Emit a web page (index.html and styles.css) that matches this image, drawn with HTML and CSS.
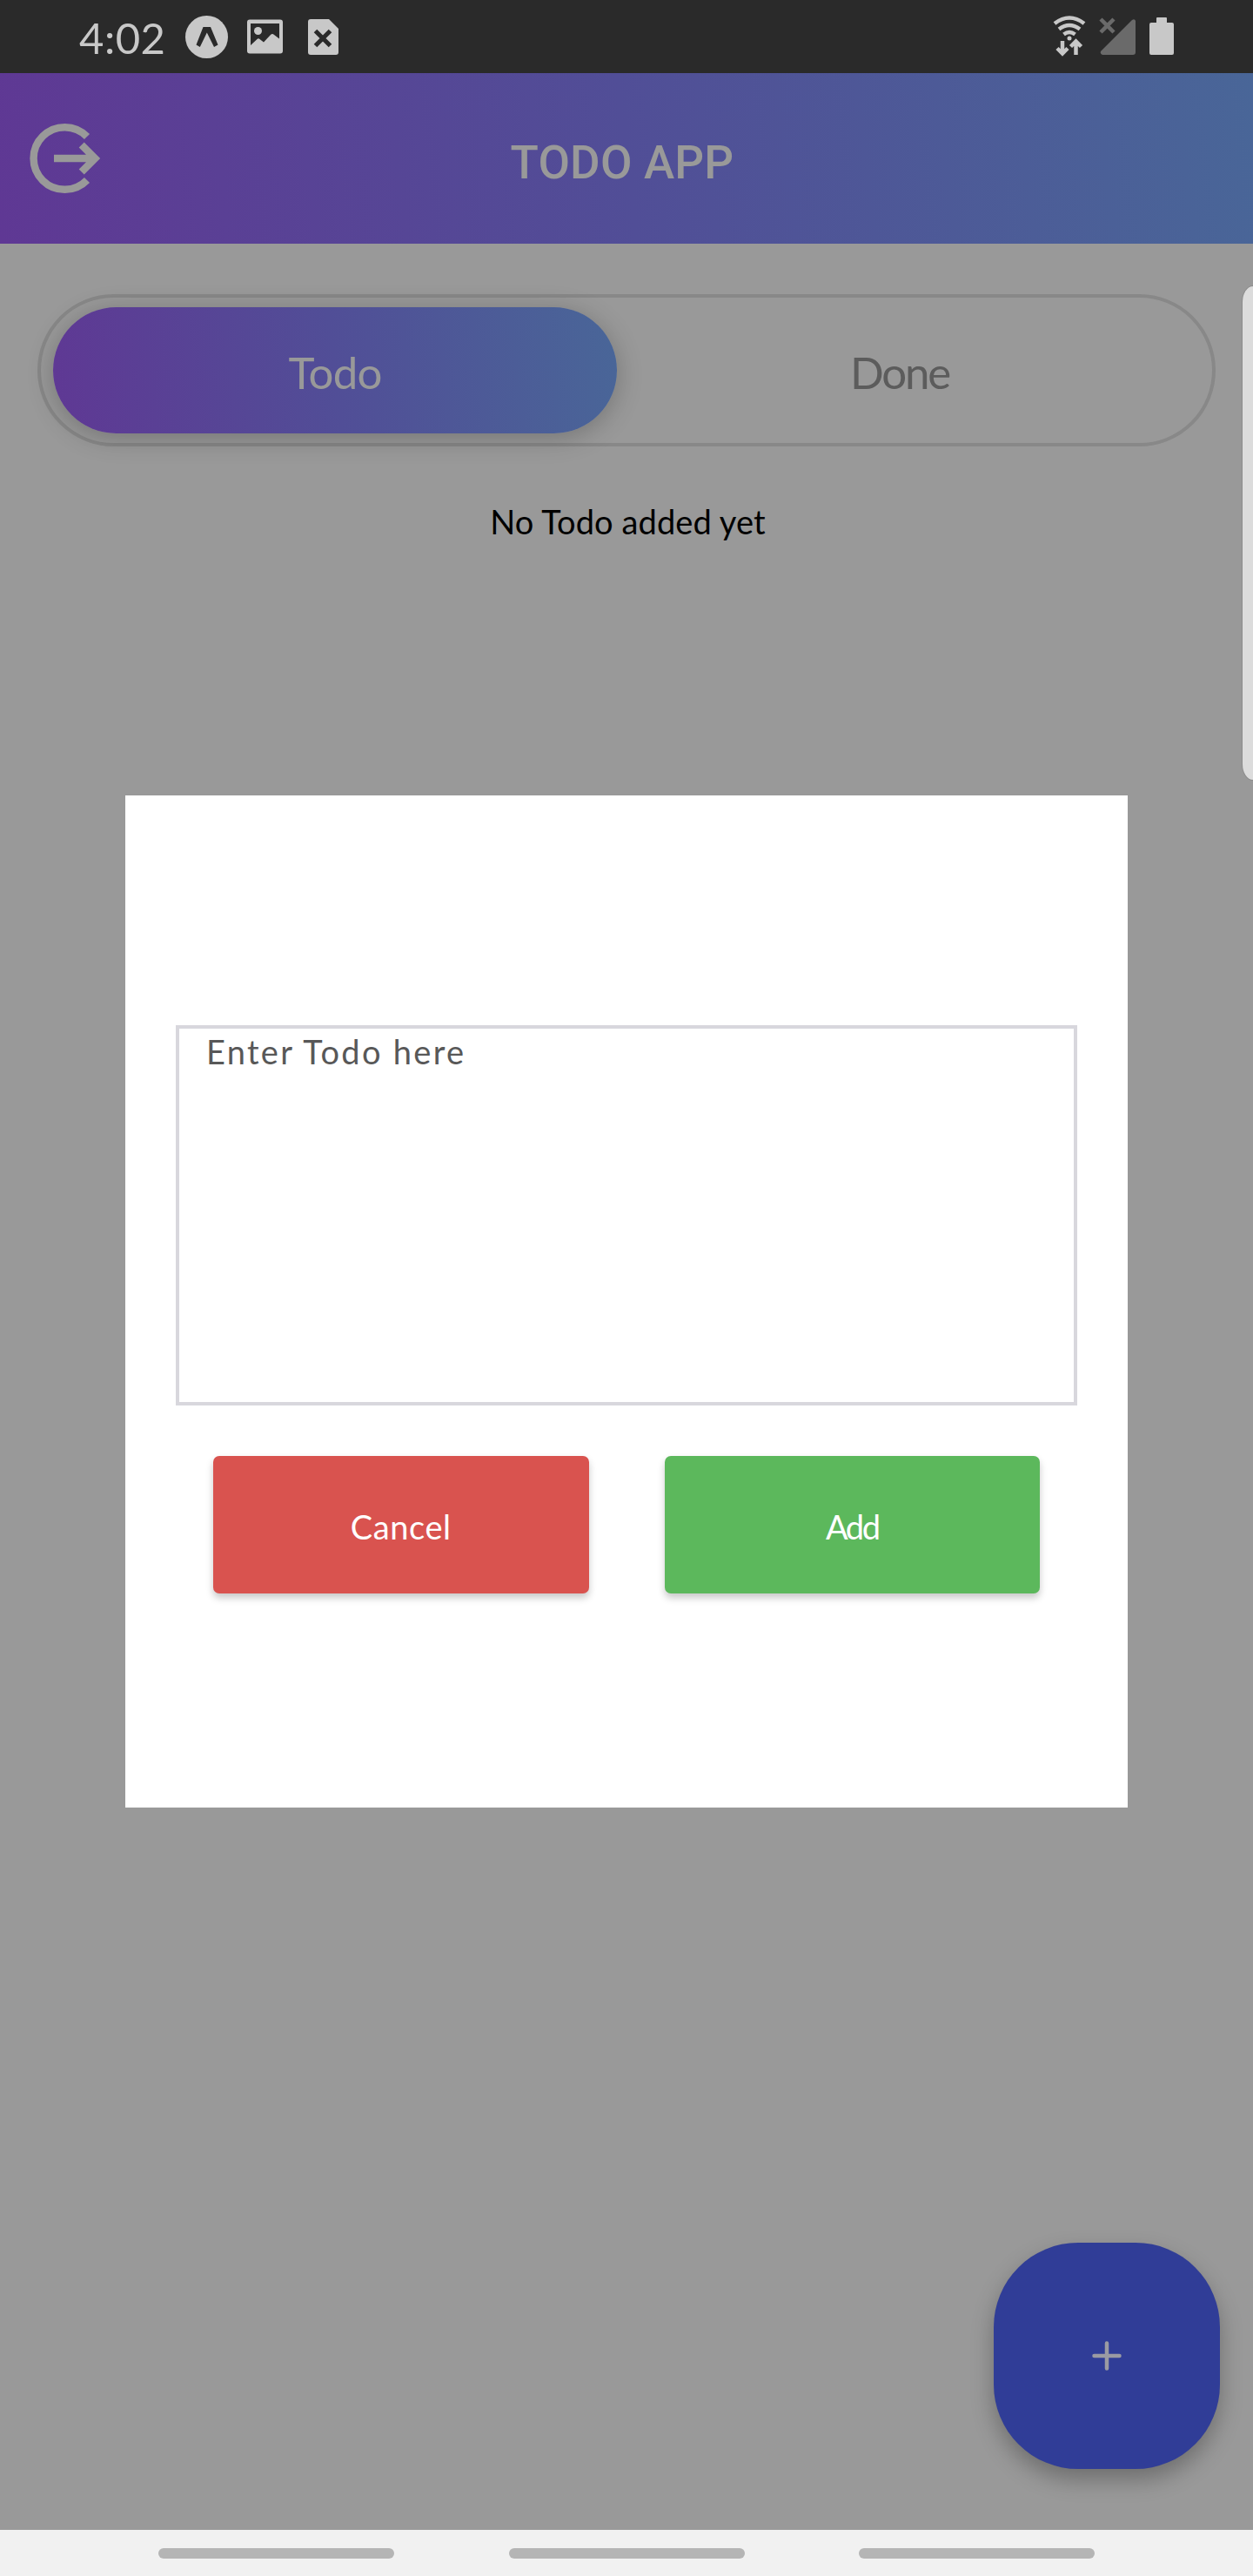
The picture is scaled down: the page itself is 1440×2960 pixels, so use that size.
FILE: index.html
```html
<!DOCTYPE html>
<html lang="en">
<head>
<meta charset="utf-8">
<title>Todo App</title>
<link rel="stylesheet" href="styles.css">
</head>
<body>
<div class="screen">
  <header class="status">
    <span class="clock">4:02</span>
    <svg width="180" height="52" viewBox="0 0 180 52">
      <circle cx="25.500" cy="26.500" r="24.500" fill="#c8c8c8"/>
      <path fill="#2a2a2a" d="M21.500 15h8.500l8.500 20.500-4.500 2.500-8.200-16.500L17.800 38l-4.300-2.500z"/>
      <path fill="#c8c8c8" fill-rule="evenodd" d="M75 6.500h35q3 0 3 3v33q0 3-3 3H75q-3 0-3-3v-33q0-3 3-3zm1 4.500v25l7.500-7q1.500-1.500 3 0l4.500 3.500 8-8.500q2-2 4 0l6 4.500V11z"/>
      <circle cx="84.500" cy="19.500" r="4.500" fill="#c8c8c8"/>
      <path fill="#c8c8c8" d="M145 6h21l11 11v27q0 3-3 3h-29q-3 0-3-3V9q0-3 3-3z"/>
      <path d="m150.500 19.500 17 17m0-17-17 17" stroke="#2a2a2a" stroke-width="5"/>
    </svg>
    <svg class="signals" width="142" height="52" viewBox="0 0 142 52">
      <g fill="none" stroke="#c8c8c8" stroke-width="4.500">
        <path d="M2 11q17-13 34 0M7 17.500q12-9 24 0M12.500 23.500q6.500-5 13 0"/>
        <path d="M11 31v14M5 39.500l6 6 6-6M26.500 47V34M20.500 37.500l6-6 6 6"/>
      </g>
      <circle cx="19" cy="28" r="2.500" fill="#c8c8c8"/>
      <path d="m55 6 15 15m0-15L55 21" stroke="#6a6a6a" stroke-width="4.500"/>
      <path fill="#6a6a6a" d="M91 7q3-2 4 1v36q0 3-3 3H57q-3-1-2-4z"/>
      <path fill="#c8c8c8" d="M119 5q0-1 1-1h10q1 0 1 1v5h6q2 0 2 2v33q0 2-2 2h-24q-2 0-2-2V12q0-2 2-2h6z"/>
    </svg>
  </header>
  <div class="appbar">
    <svg class="logout" width="84" height="84" viewBox="0 0 84 84" fill="none" stroke="#999" stroke-width="8.500">
      <path d="M67 17A35.800 35.800 0 1 0 67 67M29 42h47M60.700 26.500 76.200 42 60.700 57.500"/>
    </svg>
    <h1 class="title">TODO APP</h1>
  </div>
  <main class="content">
    <div class="tabs">
      <div class="tab active">Todo</div>
      <div class="tab done">Done</div>
    </div>
    <p class="empty">No Todo added yet</p>
    <button class="fab" aria-label="Add">
      <svg width="34" height="34" viewBox="0 0 34 34" stroke="#9a9aa3" stroke-width="4.500" stroke-linecap="round"><path d="M17 2.500v29M2.500 17h29"/></svg>
    </button>
    <section class="dialog">
      <div class="input">Enter Todo here</div>
      <div class="actions">
        <button class="btn cancel">Cancel</button>
        <button class="btn add">Add</button>
      </div>
    </section>
    <div class="edge"></div>
  </main>
  <footer class="nav"><i></i><i></i><i></i></footer>
</div>
</body>
</html>
```
FILE: styles.css
```css
* { box-sizing: border-box; }
body { margin: 0; background: #999; font-family: Lato, sans-serif; }
button { border: 0; padding: 0; font-family: inherit; }
svg { display: block; flex: none; }

.screen {
  width: 1440px;
  height: 2960px;
  display: flex;
  flex-direction: column;
  background: #999;
  overflow: hidden;
}

/* System status bar */
.status {
  height: 84px;
  background: #2a2a2a;
  display: flex;
  align-items: center;
  padding: 0 88px 0 91px;
}
.clock { width: 121px; padding-top: 2px; font-size: 49px; letter-spacing: .5px; color: #c8c8c8; }
.signals { margin-left: auto; }

/* App header */
.appbar {
  height: 196px;
  display: grid;
  grid-template-columns: 117px 1fr 117px;
  align-items: center;
  padding-right: 10px;
  background: linear-gradient(83deg, #5f3894, #514e97 50%, #496698);
}
.logout { margin-left: 33px; }
.title {
  margin: 0;
  padding-top: 10px;
  font: 500 53px/62px Roboto, sans-serif;
  letter-spacing: .2px;
  text-align: center;
  color: #999;
}

.content { flex: 1; position: relative; padding: 58px 43px 0; }

/* Segmented tabs */
.tabs {
  height: 175px;
  display: flex;
  padding: 11px 14px;
  border: 4px solid #888;
  border-radius: 88px;
}
.tab {
  flex: 1;
  display: flex;
  align-items: center;
  justify-content: center;
  padding-top: 4px;
  font-size: 51px;
  color: #5c5c5c;
}
.active {
  flex: 0 0 648px;
  border-radius: 73px;
  background: linear-gradient(83deg, #5f3894, #514e97 50%, #496698);
  box-shadow: 0 5px 30px rgba(0, 0, 0, .24);
  letter-spacing: -.8px;
  color: #999;
}
.done { padding-right: 20px; letter-spacing: -2.2px; }
.empty {
  margin: 63px 0 0;
  font-size: 38px;
  line-height: 46px;
  letter-spacing: .1px;
  text-align: center;
  padding-left: 3px;
  color: #000;
}

/* Dialog over the list */
.dialog {
  position: absolute;
  left: 144px;
  top: 634px;
  width: 1152px;
  height: 1163px;
  padding: 264px 58px 0;
  background: #fff;
}
.input {
  height: 437px;
  padding: 3px 31px;
  border: 4px solid #d8d7dd;
  font-size: 38px;
  line-height: 46px;
  letter-spacing: 2.3px;
  color: #585858;
}
.actions { display: flex; gap: 87px; padding: 58px 43px 0; }
.btn {
  width: 432px;
  height: 158px;
  padding-top: 3px;
  border-radius: 7px;
  font-size: 38px;
  letter-spacing: .6px;
  color: #fff;
  box-shadow: 0 5px 8px rgba(0, 0, 0, .22);
}
.cancel { background: #d9534f; }
.add { background: #5cb85c; letter-spacing: -2.5px; }

.fab {
  position: absolute;
  right: 38px;
  bottom: 70px;
  width: 260px;
  height: 260px;
  display: flex;
  align-items: center;
  justify-content: center;
  padding-right: 1px;
  border-radius: 97px;
  background: #303d97;
  box-shadow: 0 12px 26px rgba(0, 0, 0, .28);
}

/* Edge panel handle */
.edge {
  position: absolute;
  right: -12px;
  top: 49px;
  width: 24px;
  height: 567px;
  border-radius: 12px / 18px;
  background: #dcdcdc;
  box-shadow: 0 0 0 1px #8c8c8c;
}

/* Navigation gesture hints */
.nav {
  height: 53px;
  display: flex;
  justify-content: center;
  gap: 131.5px;
  padding-top: 21px;
  background: #f1f1f1;
}
.nav i { width: 271px; height: 12px; border-radius: 6px; background: #b5b5b5; }
```
